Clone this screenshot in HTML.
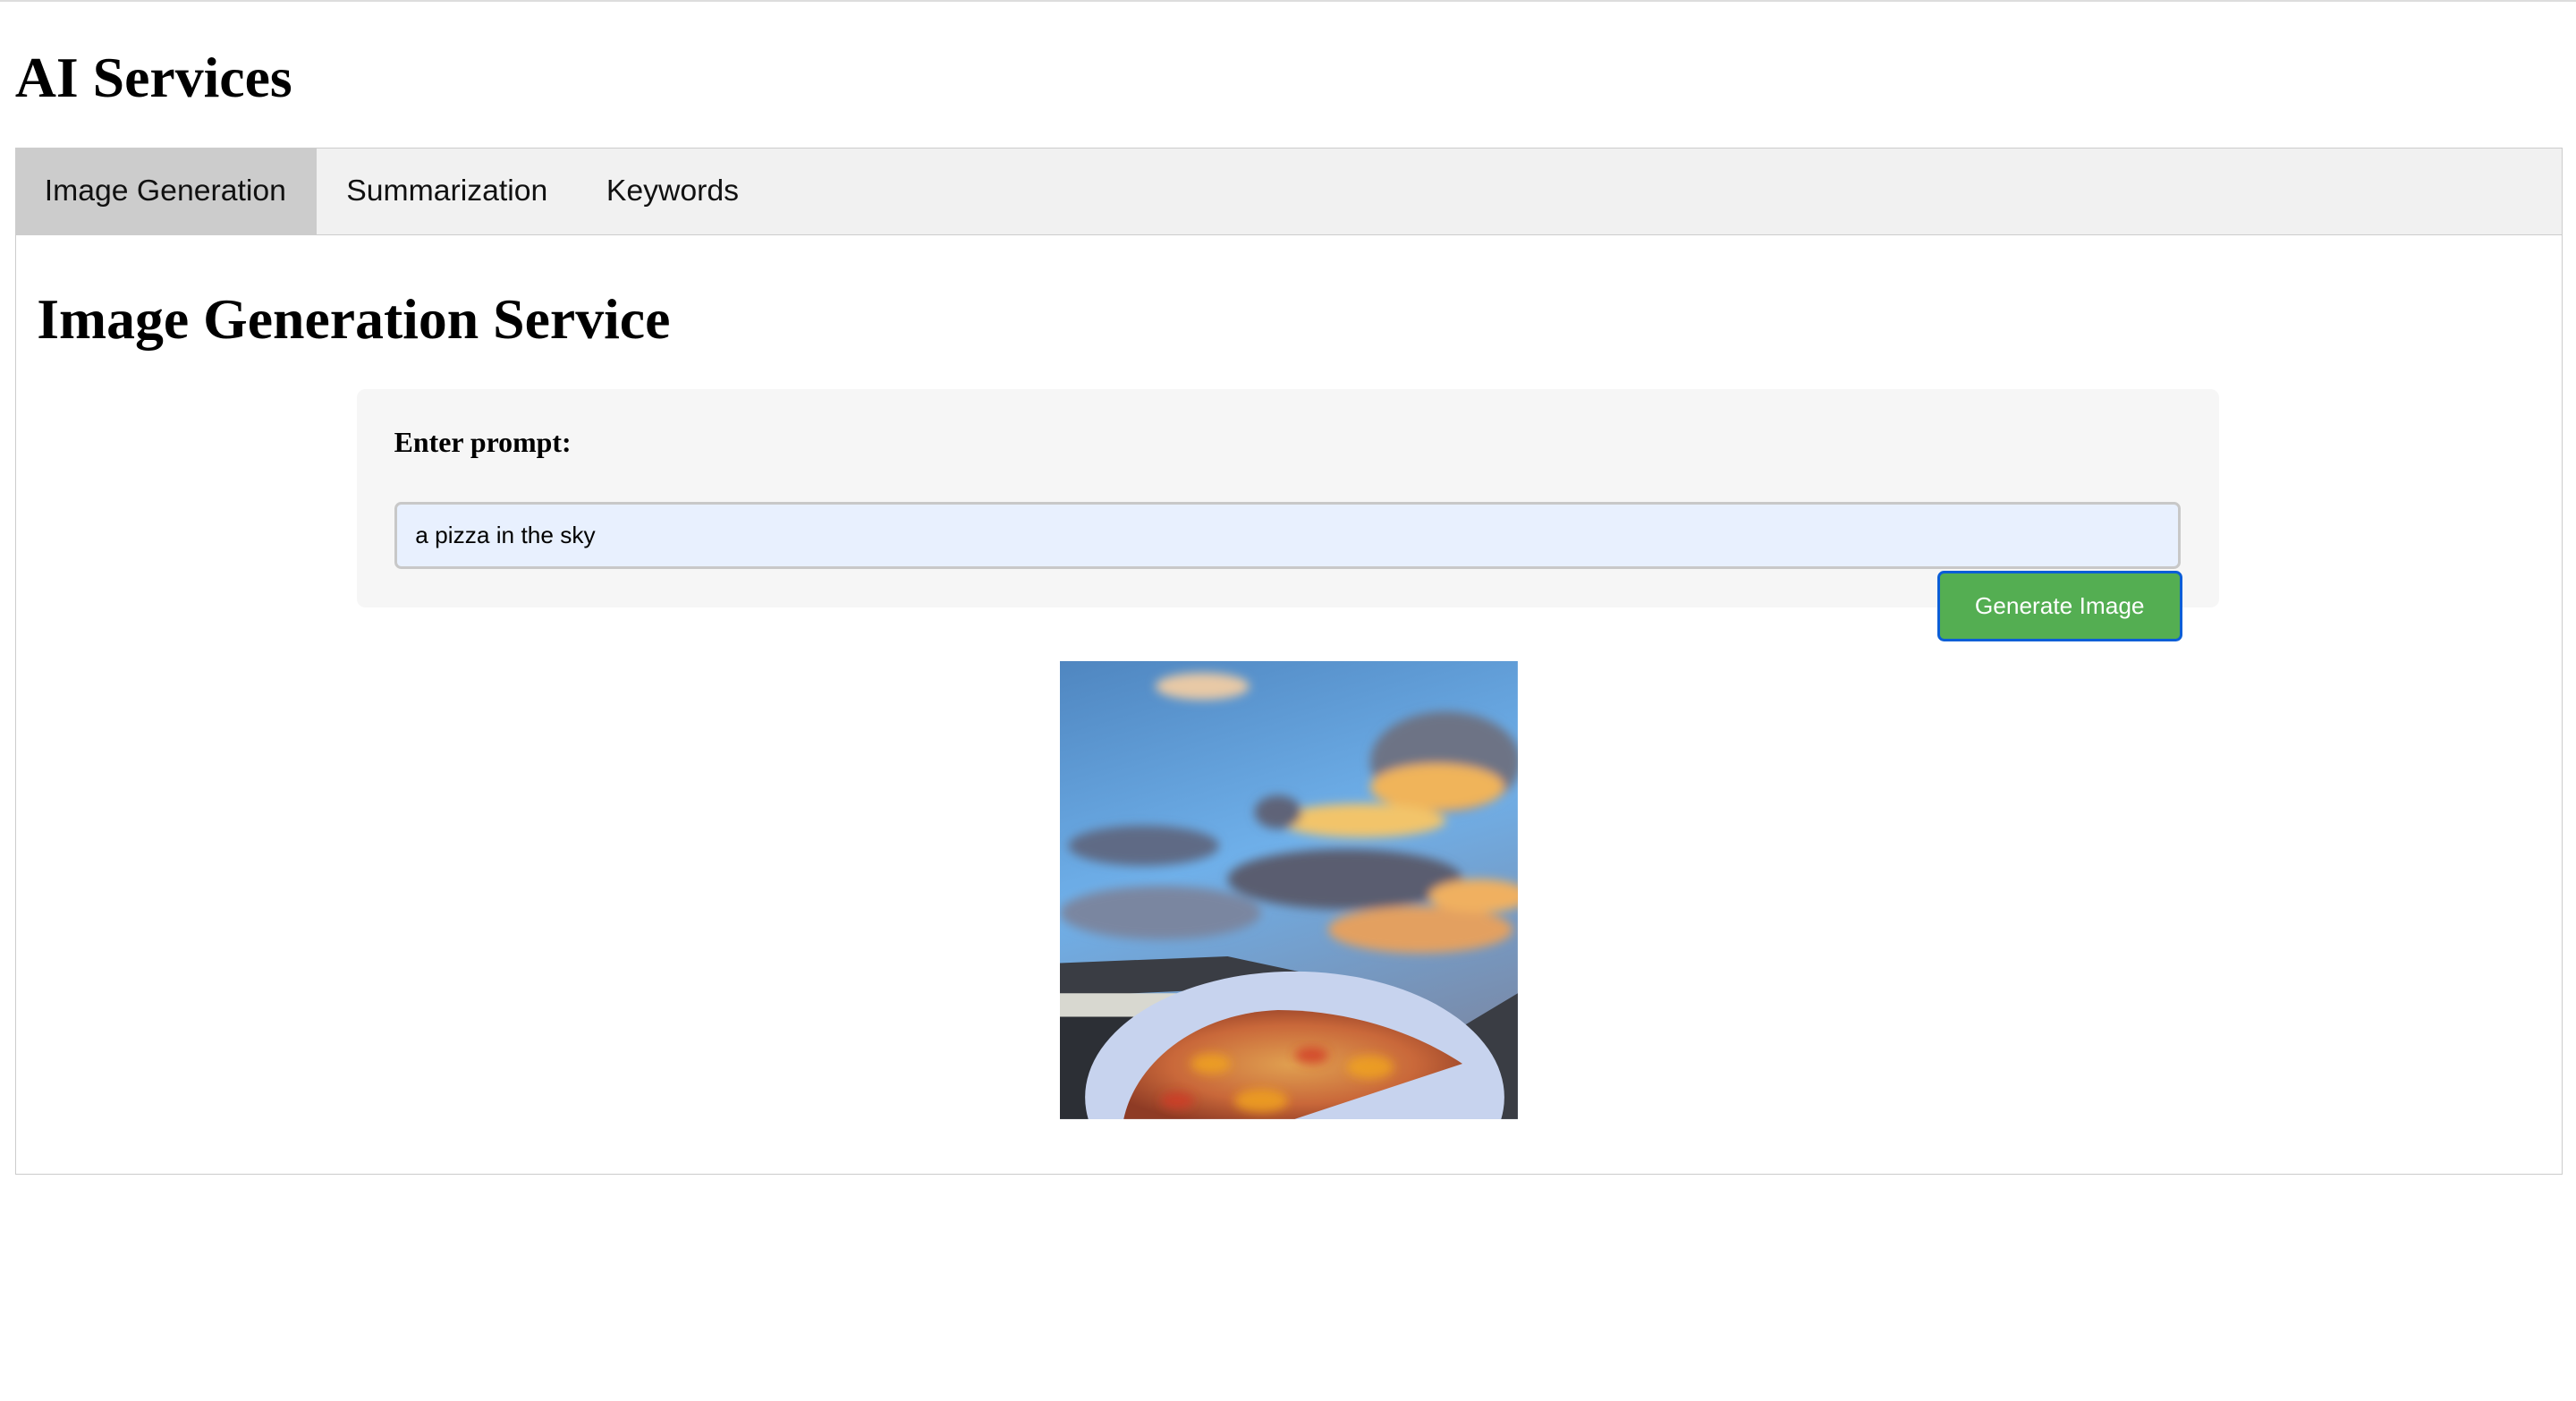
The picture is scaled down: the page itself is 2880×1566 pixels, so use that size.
<!DOCTYPE html>
<html><head><meta charset="utf-8">
<style>
html,body{margin:0;padding:0;background:#fff;}
body{width:1536px;height:835px;zoom:1.875;position:relative;overflow:hidden;font-family:"Liberation Sans",Arial,sans-serif;}
.abs{position:absolute;}
.topline{left:0;top:0;width:1536px;height:1px;background:#ddd;}
h1,h2{margin:0;font-family:"Liberation Serif","Times New Roman",serif;font-weight:bold;font-size:34px;line-height:38px;position:absolute;white-space:nowrap;}
.box{left:9px;top:88px;width:1518px;height:611px;border:1px solid #ccc;}
.tabbar{left:0;top:0;width:1518px;height:51px;background:#f1f1f1;border-bottom:1px solid #ccc;}
.tab{position:absolute;top:0;height:51px;line-height:51px;font-size:18px;color:#111;white-space:nowrap;}
.form{left:213px;top:232px;width:1110px;height:130px;background:#f6f6f6;border-radius:5px;}
.lbl{font-family:"Liberation Serif","Times New Roman",serif;font-weight:bold;font-size:17px;left:235px;top:254px;line-height:20px;}
.inp{left:235px;top:299px;width:1062px;height:37px;border:2px solid #c8c8c8;border-radius:4px;background:#e8f0fe;font-size:14px;line-height:37px;}
.btn{left:1155px;top:340px;width:143px;height:39px;border:2px solid #0b5ed7;border-radius:4px;background:#54ae52;color:#fff;font-size:14px;line-height:39px;text-align:center;}
</style></head><body>
<div class="abs topline"></div>
<h1 style="left:9px;top:27px;">AI Services</h1>
<div class="abs box">
  <div class="abs tabbar">
    <div class="tab" style="left:0;width:179px;background:#ccc;padding-left:17px;box-sizing:border-box;">Image Generation</div>
    <div class="tab" style="left:197px;">Summarization</div>
    <div class="tab" style="left:352px;">Keywords</div>
  </div>
</div>
<h2 style="left:22px;top:171px;">Image Generation Service</h2>
<div class="abs form"></div>
<div class="abs lbl">Enter prompt:</div>
<div class="abs inp"><span style="padding-left:11px;">a pizza in the sky</span></div>
<div class="abs btn">Generate Image</div>
<svg class="abs" style="left:632px;top:394px;" width="273" height="273" viewBox="0 0 273 273">
  <defs>
    <linearGradient id="sky" x1="0" y1="0" x2="0.3" y2="1">
      <stop offset="0" stop-color="#4f86c0"/>
      <stop offset="0.5" stop-color="#6fb0ea"/>
      <stop offset="1" stop-color="#7a8aa8"/>
    </linearGradient>
    <filter id="b"><feGaussianBlur stdDeviation="3"/></filter>
    <radialGradient id="pz" cx="0.5" cy="0.5" r="0.6">
      <stop offset="0" stop-color="#e0a050"/>
      <stop offset="0.6" stop-color="#c9683a"/>
      <stop offset="1" stop-color="#8e3b25"/>
    </radialGradient>
  </defs>
  <rect width="273" height="273" fill="url(#sky)"/>
  <g filter="url(#b)">
    <ellipse cx="85" cy="15" rx="28" ry="8" fill="#e8c9a6"/>
    <ellipse cx="230" cy="60" rx="45" ry="30" fill="#6d7385"/>
    <ellipse cx="225" cy="75" rx="40" ry="14" fill="#f0b45a"/>
    <ellipse cx="180" cy="95" rx="50" ry="10" fill="#f2c46a"/>
    <ellipse cx="130" cy="90" rx="14" ry="10" fill="#5f6478"/>
    <ellipse cx="50" cy="110" rx="45" ry="12" fill="#5e6a85"/>
    <ellipse cx="170" cy="130" rx="70" ry="18" fill="#5a5d70"/>
    <ellipse cx="60" cy="150" rx="60" ry="16" fill="#7a86a0"/>
    <ellipse cx="215" cy="160" rx="55" ry="14" fill="#e3a060"/>
    <ellipse cx="250" cy="140" rx="30" ry="10" fill="#f0b060"/>
  </g>
  <polygon points="0,180 100,176 175,192 0,200" fill="#3a3d44"/>
  <rect x="0" y="200" width="175" height="73" fill="#2c2f35"/>
  <rect x="0" y="198" width="175" height="14" fill="#d8d8d0"/>
  <polygon points="223,228 273,198 273,273 223,273" fill="#3a3d44"/>
  <ellipse cx="140" cy="260" rx="125" ry="75" fill="#c7d3ee"/>
  <path d="M38,273 C45,240 80,210 130,208 C170,208 210,220 240,240 L140,273 Z" fill="url(#pz)"/>
  <g opacity="0.8" filter="url(#b)">
    <ellipse cx="90" cy="240" rx="12" ry="6" fill="#f2a41c"/>
    <ellipse cx="185" cy="242" rx="14" ry="7" fill="#f2a41c"/>
    <ellipse cx="120" cy="262" rx="16" ry="7" fill="#f2a41c"/>
    <ellipse cx="150" cy="235" rx="10" ry="5" fill="#d23a28"/>
    <ellipse cx="70" cy="262" rx="10" ry="5" fill="#d23a28"/>
  </g>
</svg>
</body></html>
